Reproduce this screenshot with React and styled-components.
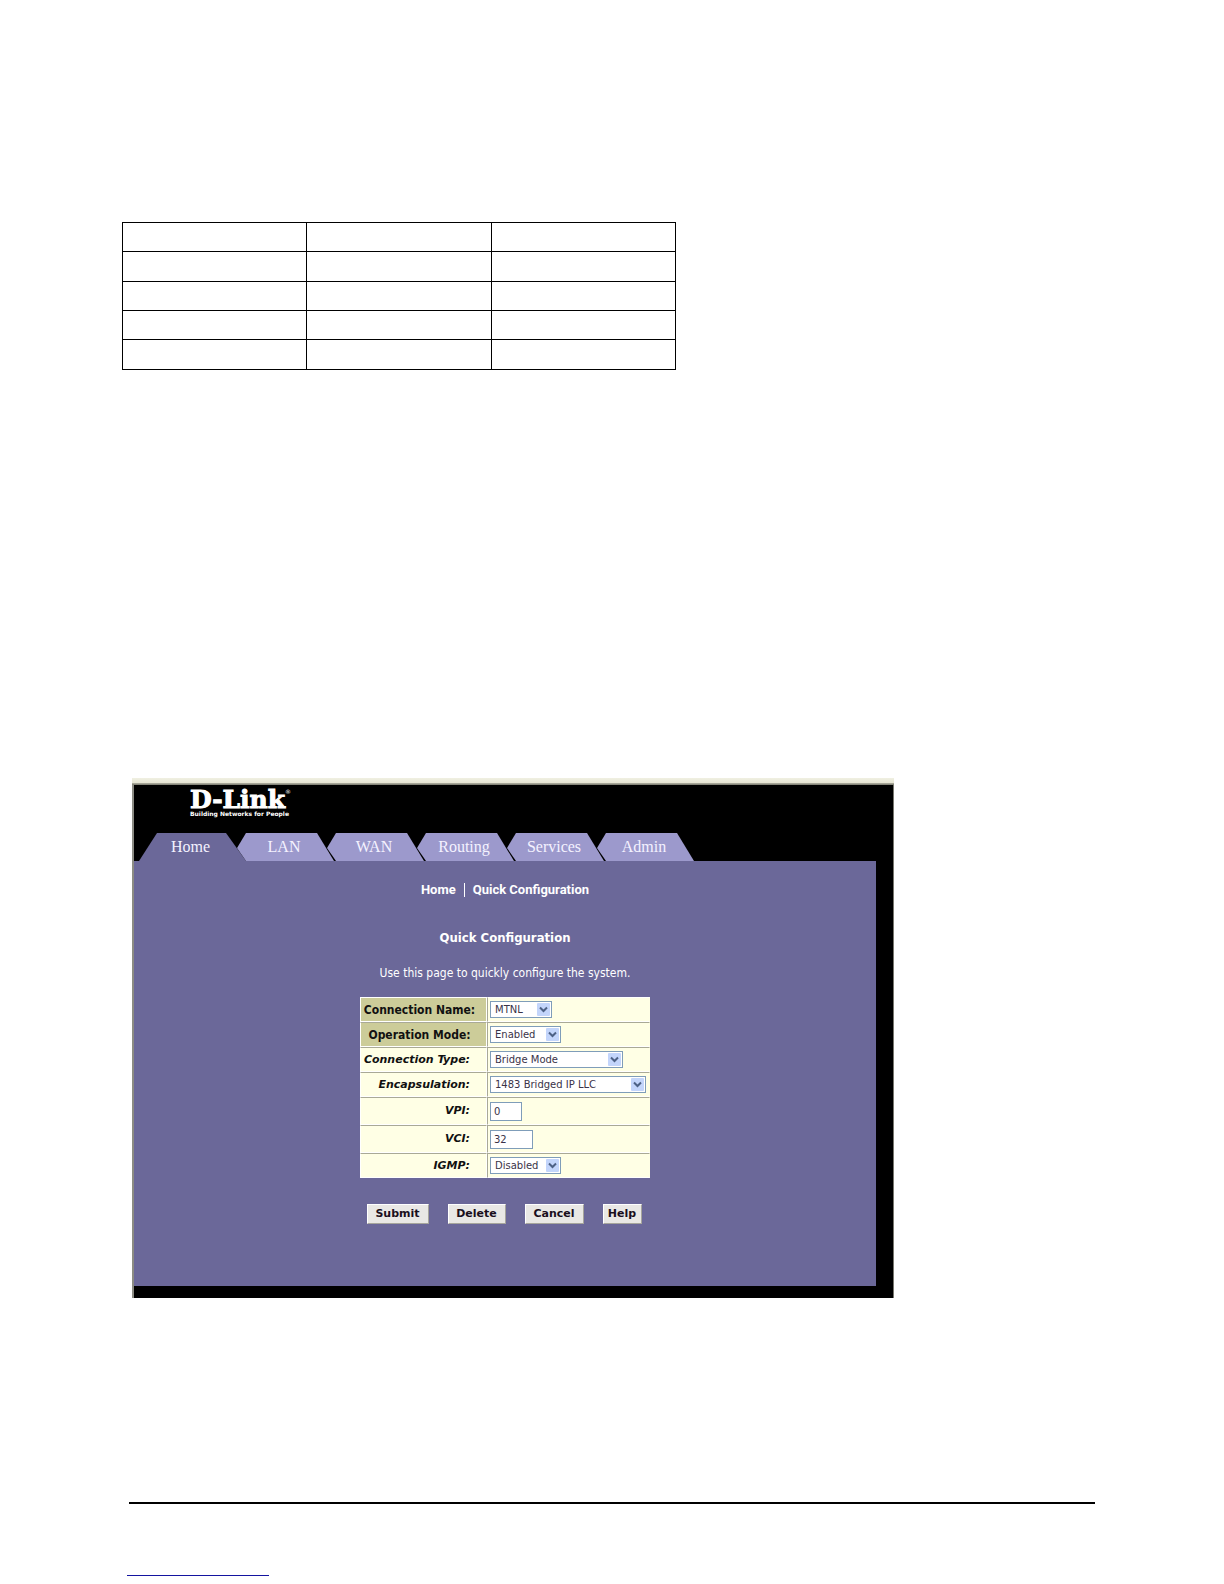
import React, {useState} from 'react';
import styled, {createGlobalStyle} from 'styled-components';

const GlobalStyle = createGlobalStyle`
    * {
        box-sizing: border-box;
    }
    body {
        margin: 0;
        background-color: #fff;
        font-family: "DejaVu Sans", Verdana, sans-serif;
    }
`;

const Page = styled.main`
    padding: 222px 129px 8px 122px;
`;

const GridTable = styled.table`
    width: 100%;
    max-width: 554px;
    table-layout: fixed;
    border-collapse: collapse;
    td {
        height: 29px;
        padding: 0;
        border: 1px solid #000;
    }
    tr:nth-child(2) td, tr:last-child td {
        height: 30px;
    }
`;

const Frame = styled.section`
    width: 100%;
    max-width: 762px;
    margin: 408px 0 0 10px;
    padding-bottom: 12px;
    background-color: #000;
    border-left: 2px solid #8c8c84;
    border-right: 1px solid #77776f;
`;

const WindowEdge = styled.div`
    height: 7px;
    margin: 0 -1px 0 -2px;
    background: linear-gradient(#f0f0e2 0, #e6e5d3 5px, #b5b4a6 5px, #77776c 7px);
`;

const Header = styled.header`
    display: flex;
    flex-direction: column;
    justify-content: space-between;
    min-height: 76px;
    padding-top: 4px;
`;

const Logo = styled.a`
    align-self: flex-start;
    margin-left: 56px;
    color: #fff;
    text-decoration: none;
`;

const LogoName = styled.div`
    display: flex;
    align-items: flex-start;
    font: bold 25px/21px "DejaVu Serif", serif;
    -webkit-text-stroke: 1px #fff;
    sup {
        font: 6px/6px "DejaVu Sans", sans-serif;
        -webkit-text-stroke: 0;
    }
`;

const LogoTagline = styled.div`
    font: bold 6px/8px "DejaVu Sans", sans-serif;
    white-space: nowrap;
`;

const Tabs = styled.nav`
    display: flex;
    padding-left: 5px;
`;

const Tab = styled.a`
    width: 98px;
    height: 28px;
    margin-left: -8px;
    padding-right: 2px;
    background-color: #9c99cc;
    clip-path: polygon(1px 15px, 10px 0, 81px 0, 98px 100%, 10px 100%);
    color: #f4f2ff;
    font: 16px/28px "Liberation Serif", serif;
    text-align: center;
    text-decoration: none;
`;

const HomeTab = styled(Tab)`
    width: 107px;
    margin: 0 -2px 0 0;
    padding-right: 4px;
    background-color: #6b6899;
    clip-path: polygon(18px 0, 87px 0, 107px 100%, 0 100%);
`;

const Panel = styled.div`
    display: flex;
    flex-direction: column;
    align-items: center;
    min-height: 425px;
    margin-right: 17px;
    padding-top: 22px;
    background-color: #6b6899;
    color: #fff;
`;

const Crumbs = styled.nav`
    display: flex;
    align-items: center;
    font: bold 13px/14px Roboto, sans-serif;
    a {
        padding: 0 8px;
        color: #fff;
        text-decoration: none;
    }
    a + a {
        border-left: 1px solid #fff;
    }
`;

const Title = styled.h1`
    margin: 33px 0 0;
    font: bold 13px/16px "DejaVu Sans Condensed", "DejaVu Sans", sans-serif;
`;

const Intro = styled.p`
    margin: 19px 0 16px;
    font: 12px/16px "DejaVu Sans Condensed", "DejaVu Sans", sans-serif;
`;

const ConfigTable = styled.table`
    width: 290px;
    border-collapse: separate;
    border-spacing: 0;
    background-color: #ffffe5;
    color: #111;
    th, td {
        padding: 0;
        border: 1px solid;
        border-color: #a9a996 #fff #fff #a9a996;
    }
    th {
        width: 127px;
    }
    td {
        padding-left: 2px;
        border-right-color: #ffffe5;
    }
    tr:first-child > * {
        border-top-color: #fff;
    }
    th:first-child {
        border-left-color: #fff;
    }
`;

const ConfigRow = styled.tr`
    height: ${(props) => (props.$tall ? '28px' : '25px')};
`;

const RowHead = styled.th`
    background-color: ${(props) => (props.$main ? '#cccc99' : '#ffffe5')};
    font: ${(props) => (props.$main
        ? 'bold 12px/14px "DejaVu Sans Condensed", "DejaVu Sans", sans-serif'
        : 'italic bold 11px/14px "DejaVu Sans", sans-serif')};
    text-align: ${(props) => (props.$main ? 'center' : 'right')};
    label {
        padding-right: ${(props) => (props.$main ? '8px' : '16px')};
        white-space: nowrap;
    }
`;

const SelectBox = styled.div`
    position: relative;
    width: ${(props) => props.$width}px;
    height: 17px;
    svg {
        position: absolute;
        top: 2px;
        right: 2px;
        width: 13px;
        height: 13px;
        pointer-events: none;
    }
`;

const Select = styled.select`
    display: block;
    appearance: none;
    width: 100%;
    height: 100%;
    padding: 0 14px 0 4px;
    border: 1px solid #7f9db9;
    border-radius: 0;
    background-color: #fff;
    color: #3a3348;
    font: 10px/14px "DejaVu Sans", sans-serif;
`;

const TextBox = styled.input`
    display: block;
    width: ${(props) => props.$width}px;
    height: 19px;
    padding: 0 3px;
    border: 1px solid #7f9db9;
    background-color: #fff;
    color: #3a3348;
    font: 10px/14px "DejaVu Sans", sans-serif;
`;

const Actions = styled.div`
    display: flex;
    gap: 19px;
    margin-top: 26px;
    padding-right: 2px;
`;

const Button = styled.button`
    width: ${(props) => props.$width}px;
    height: 20px;
    padding: 0;
    border: 1px solid;
    border-color: #fff #a6a59c #a6a59c #fff;
    background-color: #e9e8e5;
    color: #1a0f1c;
    font: bold 11px/14px "DejaVu Sans", sans-serif;
    cursor: pointer;
`;

const FooterRule = styled.hr`
    margin: 204px 0 71px 7px;
    border: 0;
    border-top: 2px solid #000;
`;

const FooterLine = styled.div`
    width: 142px;
    margin-left: 5px;
    border-top: 1px solid #1414a0;
`;

const tabs = ['LAN', 'WAN', 'Routing', 'Services', 'Admin'];

const fields = [
    {id: 'name', label: 'Connection Name:', value: 'MTNL', width: 62, main: true},
    {id: 'mode', label: 'Operation Mode:', value: 'Enabled', options: ['Enabled', 'Disabled'], width: 71, main: true},
    {id: 'type', label: 'Connection Type:', value: 'Bridge Mode', width: 133},
    {id: 'encap', label: 'Encapsulation:', value: '1483 Bridged IP LLC', width: 156},
    {id: 'vpi', label: 'VPI:', value: '0', width: 32, text: true},
    {id: 'vci', label: 'VCI:', value: '32', width: 43, text: true},
    {id: 'igmp', label: 'IGMP:', value: 'Disabled', options: ['Disabled', 'Enabled'], width: 71},
];

const buttons = [
    {title: 'Submit', width: 62},
    {title: 'Delete', width: 58},
    {title: 'Cancel', width: 59},
    {title: 'Help', width: 39},
];

const initial = Object.fromEntries(fields.map((field) => [field.id, field.value]));

const Field = ({field, value, onChange}) => {
    if (field.text) {
        return <TextBox id={field.id} type="text" $width={field.width} value={value} onChange={onChange}/>;
    }
    return (
        <SelectBox $width={field.width}>
            <Select id={field.id} value={value} onChange={onChange}>
                {(field.options || [field.value]).map((option) => (
                    <option key={option}>{option}</option>
                ))}
            </Select>
            <svg viewBox="0 0 13 13" aria-hidden="true">
                <rect width="13" height="13" rx="1" fill="#c3d5fb"/>
                <path d="M3 4.5 L6.5 8 L10 4.5" fill="none" stroke="#4d6185" strokeWidth="2"/>
            </svg>
        </SelectBox>
    );
};

const App = () => {
    const [values, setValues] = useState(initial);

    const change = (id) => (e) => {
        setValues({...values, [id]: e.target.value});
    };

    return (
        <Page>
            <GlobalStyle/>
            <GridTable>
                <tbody>
                    {[0, 1, 2, 3, 4].map((row) => (
                        <tr key={row}>
                            <td/>
                            <td/>
                            <td/>
                        </tr>
                    ))}
                </tbody>
            </GridTable>
            <Frame>
                <WindowEdge/>
                <Header>
                    <Logo href="#">
                        <LogoName>D-Link<sup>®</sup></LogoName>
                        <LogoTagline>Building Networks for People</LogoTagline>
                    </Logo>
                    <Tabs>
                        <HomeTab href="#home">Home</HomeTab>
                        {tabs.map((tab) => (
                            <Tab href={`#${tab.toLowerCase()}`} key={tab}>{tab}</Tab>
                        ))}
                    </Tabs>
                </Header>
                <Panel>
                    <Crumbs>
                        <a href="#home">Home</a>
                        <a href="#quick">Quick Configuration</a>
                    </Crumbs>
                    <Title>Quick Configuration</Title>
                    <Intro>Use this page to quickly configure the system.</Intro>
                    <ConfigTable>
                        <tbody>
                            {fields.map((field) => (
                                <ConfigRow key={field.id} $tall={field.text}>
                                    <RowHead scope="row" $main={field.main}>
                                        <label htmlFor={field.id}>{field.label}</label>
                                    </RowHead>
                                    <td>
                                        <Field field={field} value={values[field.id]} onChange={change(field.id)}/>
                                    </td>
                                </ConfigRow>
                            ))}
                        </tbody>
                    </ConfigTable>
                    <Actions>
                        {buttons.map((button) => (
                            <Button type="button" key={button.title} $width={button.width}>{button.title}</Button>
                        ))}
                    </Actions>
                </Panel>
            </Frame>
            <FooterRule/>
            <FooterLine/>
        </Page>
    );
};

export default App;
